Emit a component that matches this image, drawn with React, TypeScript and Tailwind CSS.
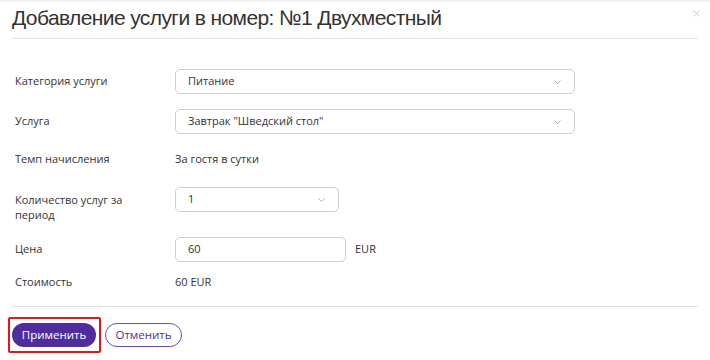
import { X } from 'lucide-react';

function Chevron() {
    return (
        <svg width="7" height="4" viewBox="0 0 7 4" className="text-[#b5b5b5]">
            <path d="M0.5 0.5 L3.5 3.5 L6.5 0.5" fill="none" stroke="currentColor" strokeWidth="1" />
        </svg>
    );
}

function Select({ value, width }: { value: string; width: string }) {
    return (
        <div
            className={`${width} h-[25px] flex items-center justify-between rounded-[5px] border border-[#cfcfcf] bg-white pl-3 pr-[13px] text-[#333]`}
        >
            <span>{value}</span>
            <Chevron />
        </div>
    );
}

export default function App() {
    return (
        <div className="w-[710px] h-[360px] bg-white border-t-2 border-[#f3f3f3] font-['Open_Sans',sans-serif] text-[11px] text-[#333] px-3 relative">
            <button className="absolute right-[8px] top-[6px] text-[#a8a8a8]">
                <X size={11} strokeWidth={1.3} />
            </button>

            <div className="border-b border-[#e2e2e2] pt-[2px] pb-[6px]">
                <h1 className="font-['Liberation_Sans',Arial,sans-serif] text-[21px] leading-[28px] tracking-[-0.6px] text-[#333]">
                    Добавление услуги в номер: №1 Двухместный
                </h1>
            </div>

            <div className="grid grid-cols-[163px_1fr] mt-[30px]">
                <div className="pl-[3px] h-[25px] flex items-center">Категория услуги</div>
                <Select value="Питание" width="w-[400px]" />

                <div className="pl-[3px] h-[25px] flex items-center mt-[15px]">Услуга</div>
                <div className="mt-[15px]">
                    <Select value='Завтрак "Шведский стол"' width="w-[400px]" />
                </div>

                <div className="pl-[3px] leading-[16px] mt-[17px]">Темп начисления</div>
                <div className="leading-[16px] mt-[17px]">За гостя в сутки</div>

                <div className="pl-[3px] pt-[5px] leading-[15px] mt-[20px] w-[130px]">Количество услуг за период</div>
                <div className="mt-[20px]">
                    <Select value="1" width="w-[164px]" />
                </div>

                <div className="pl-[3px] h-[25px] flex items-center mt-[15px]">Цена</div>
                <div className="mt-[15px] flex items-center gap-[9px]">
                    <div className="w-[171px] h-[25px] flex items-center rounded-[5px] border border-[#cfcfcf] bg-white pl-3">60</div>
                    <span>EUR</span>
                </div>

                <div className="pl-[3px] leading-[16px] mt-[12px]">Стоимость</div>
                <div className="leading-[16px] mt-[12px]">60 EUR</div>
            </div>

            <div className="border-t border-[#e2e2e2] mt-[16px] pt-[16px] flex items-center gap-[9px]">
                <div className="relative">
                    <button className="h-[24px] w-[84px] rounded-full bg-[#4f2d9e] text-white text-[11.5px]">
                        Применить
                    </button>
                    <div className="absolute left-[-4px] right-[-5px] top-[-6px] bottom-[-6px] border-2 border-[#e5151c] rounded-[2px]" />
                </div>
                <button className="h-[24px] w-[77px] rounded-full border border-[#6a4bc0] text-[#4f2d9e] text-[11.5px] bg-white">
                    Отменить
                </button>
            </div>
        </div>
    );
}
